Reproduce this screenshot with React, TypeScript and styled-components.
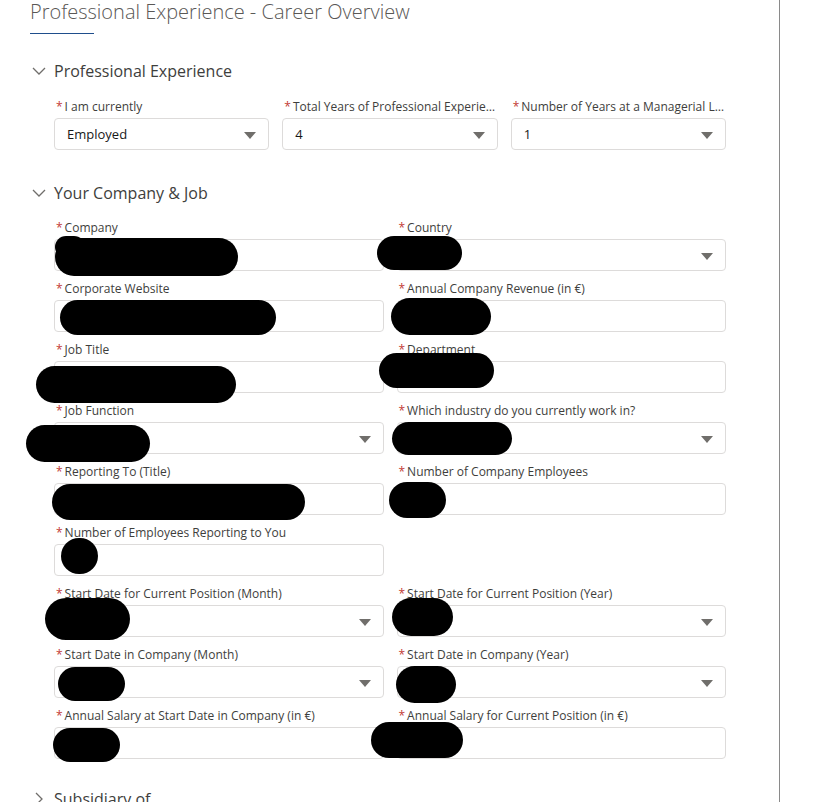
import React from "react";
import styled, { createGlobalStyle } from "styled-components";

const Global = createGlobalStyle`
  html, body { margin: 0; padding: 0; background: #fff; }
  body { font-family: "Open Sans", "Noto Sans", Arial, sans-serif; overflow: hidden; }
  * { box-sizing: border-box; }
`;

const Panel = styled.div`
  position: relative;
  width: 780px;
  height: 802px;
  border-right: 1px solid #8a8a8a;
  padding-left: 30px;
  overflow: hidden;
`;

const Title = styled.h1`
  margin: 0;
  font-family: "Open Sans", Arial, sans-serif;
  font-weight: 300;
  font-size: 20px;
  line-height: 24px;
  color: #5a5856;
  white-space: nowrap;
`;

const Underline = styled.div`
  width: 64px;
  height: 1px;
  background: #1f4e8c;
  margin-top: 9px;
`;

const Section = styled.section<{ $top: number }>`
  margin-top: ${(p) => p.$top}px;
`;

const SectionHeader = styled.div`
  display: flex;
  align-items: center;
  height: 24px;
  padding-left: 2px;
  gap: 8px;
  font-size: 16px;
  color: #3e3e3c;
`;

const Chevron = styled.svg<{ $open: boolean }>`
  width: 14px;
  height: 14px;
  flex: none;
  transform: rotate(${(p) => (p.$open ? 0 : -90)}deg);
`;

const Body = styled.div<{ $cols: number; $top: number }>`
  margin-top: ${(p) => p.$top}px;
  margin-left: 24px;
  width: 672px;
  display: grid;
  grid-template-columns: repeat(${(p) => p.$cols}, 1fr);
  column-gap: 13px;
  row-gap: 9px;
`;

const Field = styled.div`
  display: flex;
  flex-direction: column;
  min-width: 0;
`;

const Label = styled.label`
  display: block;
  height: 18px;
  line-height: 18px;
  margin-bottom: 2px;
  padding-left: 2px;
  font-size: 12px;
  color: #3e3e3c;
  white-space: nowrap;
  overflow: hidden;
  text-overflow: ellipsis;
`;

const Req = styled.abbr`
  color: #c23934;
  text-decoration: none;
  margin-right: 2px;
`;

const Box = styled.div`
  position: relative;
  height: 32px;
  border: 1px solid #dddbda;
  border-radius: 4px;
  background: #fff;
  display: flex;
  align-items: center;
  padding: 0 12px;
  font-size: 13px;
  color: #181818;
`;

const Arrow = styled.span`
  position: absolute;
  right: 12px;
  top: 13px;
  width: 0;
  height: 0;
  border-left: 6px solid transparent;
  border-right: 6px solid transparent;
  border-top: 7px solid #706e6b;
`;

const Blob = styled.div<{ $x: number; $y: number; $w: number; $h: number }>`
  position: absolute;
  left: ${(p) => p.$x}px;
  top: ${(p) => p.$y}px;
  width: ${(p) => p.$w}px;
  height: ${(p) => p.$h}px;
  background: #000;
  border-radius: ${(p) => p.$h / 2}px;
`;

const ChevronIcon = ({ open }: { open: boolean }) => (
  <Chevron $open={open} viewBox="0 0 14 14">
    <polyline points="1,4 7,10 13,4" fill="none" stroke="#706e6b" strokeWidth="1.3" />
  </Chevron>
);

type F = { label: string; value?: string; select?: boolean; empty?: boolean };

const FieldItem = ({ f }: { f: F }) => (
  <Field>
    {f.empty ? null : (
      <>
        <Label>
          <Req title="required">*</Req>
          {f.label}
        </Label>
        <Box>
          {f.value}
          {f.select && <Arrow />}
        </Box>
      </>
    )}
  </Field>
);

const row1: F[] = [
  { label: "I am currently", value: "Employed", select: true },
  { label: "Total Years of Professional Experience", value: "4", select: true },
  { label: "Number of Years at a Managerial Level", value: "1", select: true },
];

const company: F[] = [
  { label: "Company" },
  { label: "Country", select: true },
  { label: "Corporate Website" },
  { label: "Annual Company Revenue (in €)" },
  { label: "Job Title" },
  { label: "Department" },
  { label: "Job Function", select: true },
  { label: "Which industry do you currently work in?", select: true },
  { label: "Reporting To (Title)" },
  { label: "Number of Company Employees" },
  { label: "Number of Employees Reporting to You" },
  { label: "", empty: true },
  { label: "Start Date for Current Position (Month)", select: true },
  { label: "Start Date for Current Position (Year)", select: true },
  { label: "Start Date in Company (Month)", select: true },
  { label: "Start Date in Company (Year)", select: true },
  { label: "Annual Salary at Start Date in Company (in €)" },
  { label: "Annual Salary for Current Position (in €)" },
];

const blobs = [
  [55, 238, 183, 38],
  [55, 236, 30, 22],
  [377, 236, 85, 34],
  [60, 300, 216, 35],
  [391, 298, 100, 37],
  [36, 366, 200, 37],
  [379, 353, 115, 35],
  [26, 425, 124, 37],
  [392, 422, 120, 33],
  [52, 484, 253, 36],
  [389, 482, 57, 36],
  [61, 538, 37, 36],
  [45, 598, 85, 42],
  [392, 598, 61, 38],
  [58, 667, 67, 34],
  [396, 666, 60, 37],
  [53, 728, 67, 34],
  [371, 722, 92, 36],
];

export default function App() {
  return (
    <>
      <Global />
      <Panel>
        <Title>Professional Experience - Career Overview</Title>
        <Underline />
        <Section $top={25}>
          <SectionHeader>
            <ChevronIcon open />
            Professional Experience
          </SectionHeader>
          <Body $cols={3} $top={15}>
            {row1.map((f, i) => (
              <FieldItem key={i} f={f} />
            ))}
          </Body>
        </Section>
        <Section $top={31}>
          <SectionHeader>
            <ChevronIcon open />
            Your Company &amp; Job
          </SectionHeader>
          <Body $cols={2} $top={14}>
            {company.map((f, i) => (
              <FieldItem key={i} f={f} />
            ))}
          </Body>
        </Section>
        <Section $top={28}>
          <SectionHeader>
            <ChevronIcon open={false} />
            Subsidiary of
          </SectionHeader>
        </Section>
        {blobs.map(([x, y, w, h], i) => (
          <Blob key={i} $x={x} $y={y} $w={w} $h={h} />
        ))}
      </Panel>
    </>
  );
}
